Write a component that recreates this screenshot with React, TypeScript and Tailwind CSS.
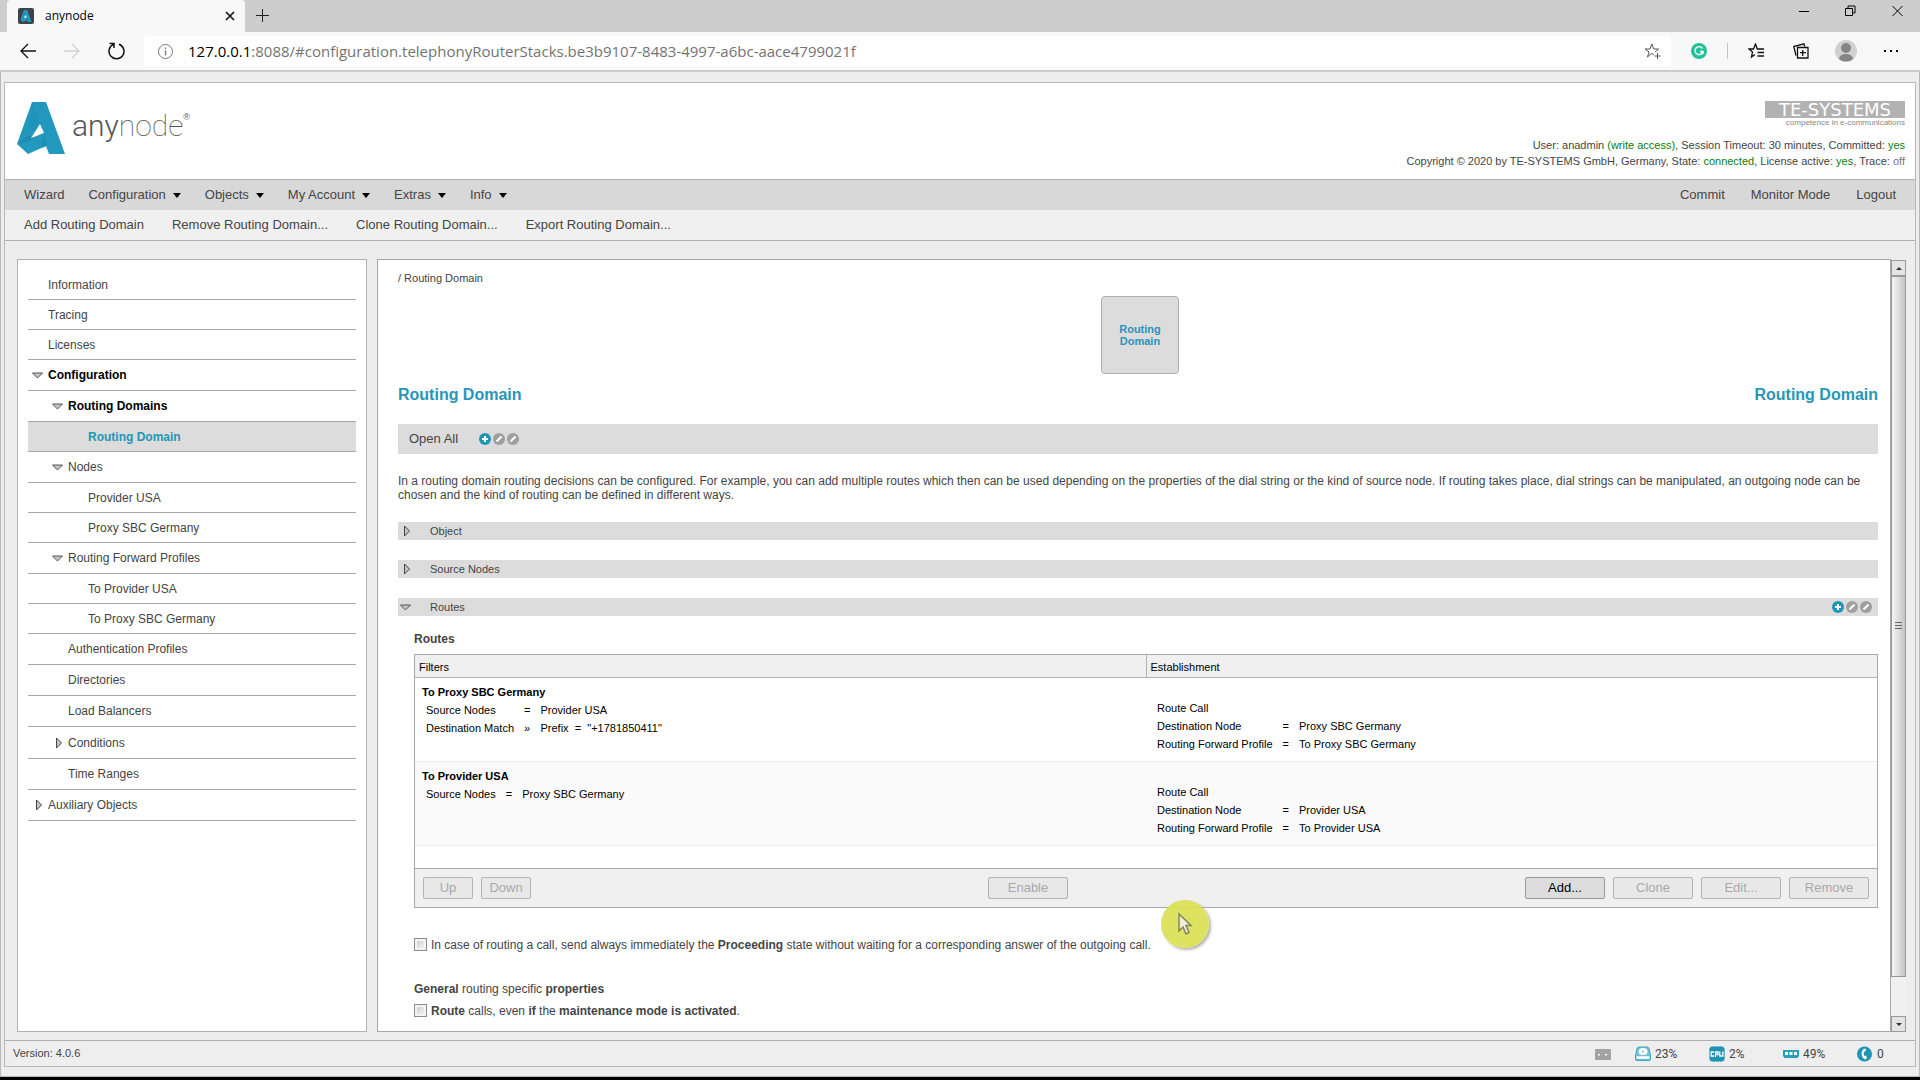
import { ReactNode } from "react";

// ---------- Types ----------
type TREE_ITEM = {
  label: string;
  level: number;
  rowClass: string;
  arrow?: "down" | "right";
  bold?: boolean;
  active?: boolean;
};

type ROUTE = {
  name: string;
  filters: { key: string; sign: string; value: ReactNode }[];
  node: string;
  profile: string;
};

// ---------- Data ----------
const tree: TREE_ITEM[] = [
  { label: "Information", level: 0, rowClass: "h-[30px]" },
  { label: "Tracing", level: 0, rowClass: "h-[30px]" },
  { label: "Licenses", level: 0, rowClass: "h-[30px]" },
  { label: "Configuration", level: 0, rowClass: "h-[31px]", arrow: "down", bold: true },
  { label: "Routing Domains", level: 1, rowClass: "h-[31px]", arrow: "down", bold: true },
  { label: "Routing Domain", level: 2, rowClass: "h-[30px]", bold: true, active: true },
  { label: "Nodes", level: 1, rowClass: "h-[31px]", arrow: "down" },
  { label: "Provider USA", level: 2, rowClass: "h-[30px]" },
  { label: "Proxy SBC Germany", level: 2, rowClass: "h-[30px]" },
  { label: "Routing Forward Profiles", level: 1, rowClass: "h-[31px]", arrow: "down" },
  { label: "To Provider USA", level: 2, rowClass: "h-[30px]" },
  { label: "To Proxy SBC Germany", level: 2, rowClass: "h-[30px]" },
  { label: "Authentication Profiles", level: 1, rowClass: "h-[31px]" },
  { label: "Directories", level: 1, rowClass: "h-[31px]" },
  { label: "Load Balancers", level: 1, rowClass: "h-[31px]" },
  { label: "Conditions", level: 1, rowClass: "h-[32px]", arrow: "right" },
  { label: "Time Ranges", level: 1, rowClass: "h-[31px]" },
  { label: "Auxiliary Objects", level: 0, rowClass: "h-[31px]", arrow: "right" },
];

const routes: ROUTE[] = [
  {
    name: "To Proxy SBC Germany",
    filters: [
      { key: "Source Nodes", sign: "=", value: "Provider USA" },
      { key: "Destination Match", sign: "»", value: <>Prefix&nbsp; = &nbsp;"+1781850411"</> },
    ],
    node: "Proxy SBC Germany",
    profile: "To Proxy SBC Germany",
  },
  {
    name: "To Provider USA",
    filters: [{ key: "Source Nodes", sign: "=", value: "Proxy SBC Germany" }],
    node: "Provider USA",
    profile: "To Provider USA",
  },
];

const menu = ["Configuration", "Objects", "My Account", "Extras", "Info"];
const actions = ["Add Routing Domain", "Remove Routing Domain...", "Clone Routing Domain...", "Export Routing Domain..."];
const indents = ["pl-0", "pl-5", "pl-10"];

// ---------- Icons ----------
const Arrow = ({ dir }: { dir: "down" | "right" }) => (
  <svg width="12" height="12" viewBox="0 0 12 12" className="shrink-0">
    {dir === "down" ? (
      <path d="M.5 4h10L5.500 9z" fill="#c4c4c4" stroke="#555" />
    ) : (
      <path d="M4.500 1v10l5-5z" fill="#c4c4c4" stroke="#444" />
    )}
  </svg>
);

const RoundActions = () => (
  <span className="flex gap-[2px]">
    <button aria-label="Add">
      <svg width="12" height="12" viewBox="0 0 12 12">
        <circle cx="6" cy="6" r="6" fill="#1e96b8" />
        <path d="M6 3v6M3 6h6" stroke="#fff" strokeWidth="2" />
      </svg>
    </button>
    {["Edit", "Edit all"].map(name => (
      <button key={name} aria-label={name}>
        <svg width="12" height="12" viewBox="0 0 12 12">
          <circle cx="6" cy="6" r="6" fill="#9f9f9f" />
          <path d="M3.500 8.500l5-5" stroke="#fff" strokeWidth="2.200" />
        </svg>
      </button>
    ))}
  </span>
);

const LogoMark = ({ className }: { className: string }) => (
  <svg viewBox="0 0 48 52" className={className}>
    <path d="M15 0h14l19 52H32l-3-8-18 8L0 42z" fill="#2298be" />
    <path d="M15 0l8 22-4 8-7-6z" fill="#1c8bb0" opacity=".4" />
    <path d="M0 42l10-8 17-3-17 9z" fill="#1a84a8" opacity=".6" />
    <path d="M27 31l3 13-5 2z" fill="#1a84a8" opacity=".5" />
    <path d="M23 22l4 9-10 4-3 1z" fill="#fff" />
  </svg>
);

// ---------- Browser window ----------
const BrowserChrome = () => (
  <>
    <div className="flex h-8 items-start justify-between bg-[#cdcdcd]">
      <div className="flex items-start pl-[7px]">
        <div className="flex h-8 w-[238px] items-center rounded-t bg-[#f8f8f8] px-[10px]">
          <span className="mr-[11px] ml-px flex h-4 w-4 items-center justify-center rounded-xs bg-[#3d4448]">
            <LogoMark className="h-3 w-3" />
          </span>
          <span className="grow font-['Open_Sans',sans-serif] text-xs text-black">anynode</span>
          <button aria-label="Close tab">
            <svg width="10" height="10" viewBox="0 0 10 10" stroke="#111" strokeWidth="1.600">
              <path d="M1 1l8 8M9 1L1 9" />
            </svg>
          </button>
        </div>
        <button aria-label="New tab" className="mt-[9px] ml-[11px]">
          <svg width="13" height="13" viewBox="0 0 13 13" stroke="#222">
            <path d="M6.500 0v13M0 6.500h13" />
          </svg>
        </button>
      </div>
      <div className="mt-[5px] mr-[17px] flex items-center gap-9 stroke-black">
        <button aria-label="Minimize">
          <svg width="10" height="12" viewBox="0 0 10 12"><path d="M0 6.500h10" /></svg>
        </button>
        <button aria-label="Restore">
          <svg width="11" height="12" viewBox="0 0 11 12" fill="none">
            <path d="M.5 3.500h7v7h-7zM3 3V1h7v7H8" />
          </svg>
        </button>
        <button aria-label="Close">
          <svg width="11" height="12" viewBox="0 0 11 12"><path d="M.5 1l10 10M10.500 1l-10 10" /></svg>
        </button>
      </div>
    </div>

    <div className="flex h-10 items-center border-b-2 border-[#cbcbcb] bg-[#f8f8f8] pr-[21px] pl-5">
      <button aria-label="Back" className="mr-7">
        <svg width="16" height="16" viewBox="0 0 16 16" fill="none" stroke="#111" strokeWidth="1.300">
          <path d="M8 1L1 8l7 7M1 8h15" />
        </svg>
      </button>
      <button aria-label="Forward" className="mr-7">
        <svg width="16" height="16" viewBox="0 0 16 16" fill="none" stroke="#cfcfcf" strokeWidth="1.300">
          <path d="M8 1l7 7-7 7M15 8H0" />
        </svg>
      </button>
      <button aria-label="Reload" className="mr-[19px]">
        <svg width="17" height="18" viewBox="0 0 17 18" fill="none" stroke="#111" strokeWidth="1.500">
          <path d="M11 2.200a7.500 7.500 0 1 1-5.500.2M1.500 1.500h4.500V6" />
        </svg>
      </button>
      <div className="flex h-[30px] grow items-center rounded bg-white px-[14px]">
        <svg width="15" height="15" viewBox="0 0 15 15" fill="none" stroke="#777" className="mr-[15px] shrink-0">
          <circle cx="7.500" cy="7.500" r="7" />
          <path d="M7.500 6.500v5M7.500 3.500v1.500" strokeWidth="1.300" />
        </svg>
        <label htmlFor="url" className="font-['Open_Sans',sans-serif] text-[15px] text-black">127.0.0.1</label>
        <input
          id="url"
          className="min-w-0 grow bg-transparent font-['Open_Sans',sans-serif] text-[15px] text-[#737373] outline-none"
          defaultValue=":8088/#configuration.telephonyRouterStacks.be3b9107-8483-4997-a6bc-aace4799021f"
        />
        <button aria-label="Add to favorites">
          <svg width="17" height="17" viewBox="0 0 17 17" fill="none" stroke="#555" className="-mr-1">
            <path d="M10 12l-2.500-1.500L3.500 14l1.500-5-4-3h5l1.800-5 1.800 5h5l-3.500 3M13.500 10v6M10.500 13h6" />
          </svg>
        </button>
      </div>
      <span className="ml-5 flex h-4 w-4 items-center justify-center rounded-full bg-[#22c197]">
        <svg width="10" height="10" viewBox="0 0 10 10" fill="none" stroke="#fff" strokeWidth="1.400">
          <path d="M8.500 2.500A4 4 0 1 0 9 5.500H6M9 5.500V8" />
        </svg>
      </span>
      <span className="mx-5 h-4 w-px bg-[#c4c4c4]" />
      <button aria-label="Favorites" className="mr-7">
        <svg width="17" height="16" viewBox="0 0 17 16" fill="none" stroke="#111" strokeWidth="1.300">
          <path d="M7 11.500L3.500 14l1-5L1 6h4.500l2-5 1.800 5H16M9.500 9.500H16M9.500 13H16" />
        </svg>
      </button>
      <button aria-label="Collections" className="mr-[26px]">
        <svg width="16" height="16" viewBox="0 0 16 16" fill="none" stroke="#111" strokeWidth="1.300">
          <path d="M4.500 4.500h10.500v10.500H4.500zM9.700 7v6M7 9.700h6M3 12.500L.8 3.500 11 .8l.6 2.500" />
        </svg>
      </button>
      <button aria-label="Profile" className="mr-[27px]">
        <svg width="22" height="22" viewBox="0 0 22 22">
          <circle cx="11" cy="11" r="11" fill="#d0d0d0" />
          <circle cx="11" cy="8" r="5" fill="#858585" />
          <path d="M4 19a7 5 0 0 1 14 0 11 11 0 0 1-14 0z" fill="#858585" />
        </svg>
      </button>
      <button aria-label="Settings">
        <svg width="15" height="3" viewBox="0 0 15 3"><path d="M0 0h2v2H0zM6 0h2v2H6zM12 0h2v2h-2z" /></svg>
      </button>
    </div>
  </>
);

// ---------- Header ----------
const Header = () => (
  <header className="flex h-24 justify-between bg-white pr-[10px] pl-3">
    <div className="flex pt-[19px]">
      <LogoMark className="mr-[7px] h-[52px] w-12" />
      <span className="font-['Roboto',sans-serif] text-[30px] leading-[48px] font-light text-[#555]">
        any<span className="font-thin">node</span>
      </span>
      <span className="pt-[10px] text-[9px] leading-[10px] text-[#555]">®</span>
    </div>
    <div className="flex flex-col items-end pt-[18px] text-[11px] leading-4 text-[#444]">
      <div className="h-[17px] w-[140px] bg-[#b2b2b2] text-center font-['DejaVu_Sans',sans-serif] text-lg leading-[17px] text-white">
        TE-SYSTEMS
      </div>
      <div className="mb-[9px] text-[8px] leading-[10px] text-[#888]">competence in e-communications</div>
      <div>
        User: anadmin <span className="text-[#0a7d0a]">(write access)</span>, Session Timeout: 30 minutes, Committed:{" "}
        <span className="text-[#0a7d0a]">yes</span>
      </div>
      <div>
        Copyright © 2020 by TE-SYSTEMS GmbH, Germany, State: <span className="text-[#0a7d0a]">connected</span>, License
        active: <span className="text-[#0a7d0a]">yes</span>, Trace: <span className="text-[#777]">off</span>
      </div>
    </div>
  </header>
);

const MenuBar = () => (
  <nav className="border-y border-[#b0b0b0] text-[13px] text-[#444]">
    <div className="flex h-[30px] items-center justify-between bg-[#d8d8d8] pr-[19px] pl-[19px]">
      <div className="flex gap-6">
        <button>Wizard</button>
        {menu.map(item => (
          <button key={item} className="flex items-center gap-[7px]">
            {item}
            <svg width="8" height="5" viewBox="0 0 8 5"><path d="M0 0h8L4 5z" /></svg>
          </button>
        ))}
      </div>
      <div className="flex gap-[26px]">
        <button>Commit</button>
        <button>Monitor Mode</button>
        <button>Logout</button>
      </div>
    </div>
    <div className="flex h-[30px] items-center gap-7 bg-[#f0f0f0] pl-[19px]">
      {actions.map(item => <button key={item}>{item}</button>)}
    </div>
  </nav>
);

// ---------- Sidebar ----------
const Sidebar = () => (
  <aside className="w-[350px] shrink-0 border border-[#b0b0b0] bg-white px-[10px] pt-[10px]">
    <ul className="text-xs text-[#444]">
      {tree.map(item => (
        <li
          key={item.label}
          className={`flex items-center border-b border-[#a8a8a8] pl-1 ${item.rowClass} ${item.active ? "bg-[#dcdcdc]" : ""}`}
        >
          <a
            href="#configuration"
            className={`flex items-center gap-1 ${indents[item.level]} ${
              item.active ? "font-bold text-[#2596b8]" : item.bold ? "font-bold text-black" : ""
            }`}
          >
            {item.arrow ? <Arrow dir={item.arrow} /> : <span className="w-3" />}
            {item.label}
          </a>
        </li>
      ))}
    </ul>
  </aside>
);

// ---------- Content ----------
const Section = ({ title, open, children }: { title: string; open?: boolean; children?: ReactNode }) => (
  <div className="mt-5 flex h-[18px] items-center justify-between bg-[#dcdcdc] pr-[6px] pl-[2px] text-[11px] text-[#444]">
    <button className="flex items-center gap-[18px]">
      <Arrow dir={open ? "down" : "right"} />
      {title}
    </button>
    {children}
  </div>
);

const ToolButton = ({ children, small, enabled }: { children: string; small?: boolean; enabled?: boolean }) => (
  <button
    disabled={!enabled}
    className={`h-[22px] rounded-xs border text-[13px] leading-5 ${small ? "w-[50px]" : "w-20"} ${
      enabled ? "border-[#999] bg-[#dcdcdc] text-black" : "border-[#b4b4b4] bg-[#e8e8e8] text-[#a8a8a8]"
    }`}
  >
    {children}
  </button>
);

const RoutesTable = () => (
  <div className="mt-2 border border-[#a8a8a8] text-[11px] text-black">
    <table className="w-full table-fixed border-collapse text-left">
      <thead>
        <tr className="h-[22px] border-b border-[#b4b4b4] bg-[#f0f0f0]">
          <th className="border-r border-[#b4b4b4] pt-[2px] pl-1 font-normal">Filters</th>
          <th className="pt-[2px] pl-1 font-normal">Establishment</th>
        </tr>
      </thead>
      <tbody>
        {routes.map(route => (
          <tr key={route.name} className="h-[84px] border-b border-[#ececec] align-top leading-[18px] even:bg-[#fafafa]">
            <td className="pt-[5px] pl-[7px]">
              <div className="font-bold">{route.name}</div>
              <div className="grid grid-cols-[auto_auto_1fr] gap-x-[10px] pl-1">
                {route.filters.map(filter => (
                  <div key={filter.key} className="contents">
                    <span>{filter.key}</span>
                    <span>{filter.sign}</span>
                    <span>{filter.value}</span>
                  </div>
                ))}
              </div>
            </td>
            <td className="pt-[21px] pl-[11px]">
              <div>Route Call</div>
              <div className="grid grid-cols-[auto_auto_1fr] gap-x-[10px]">
                <span>Destination Node</span><span>=</span><span>{route.node}</span>
                <span>Routing Forward Profile</span><span>=</span><span>{route.profile}</span>
              </div>
            </td>
          </tr>
        ))}
      </tbody>
    </table>
    <div className="h-[22px]" />
    <div className="flex h-[39px] items-center justify-between border-t border-[#a8a8a8] bg-[#f0f0f0] px-2">
      <div className="flex gap-2">
        <ToolButton small>Up</ToolButton>
        <ToolButton small>Down</ToolButton>
      </div>
      <ToolButton>Enable</ToolButton>
      <div className="flex gap-2">
        <ToolButton enabled>Add...</ToolButton>
        <ToolButton>Clone</ToolButton>
        <ToolButton>Edit...</ToolButton>
        <ToolButton>Remove</ToolButton>
      </div>
    </div>
  </div>
);

const CheckRow = ({ id, className, children }: { id: string; className: string; children: ReactNode }) => (
  <div className={`flex items-center gap-1 ${className}`}>
    <input
      id={id}
      type="checkbox"
      className="h-[13px] w-[13px] appearance-none border border-[#8c8c8c] bg-linear-to-br from-[#c4c4c4] to-white shadow-[inset_0_0_0_2px_#f4f4f4]"
    />
    <label htmlFor={id}>{children}</label>
  </div>
);

const Content = () => (
  <main className="min-w-0 grow overflow-hidden border border-[#a8a8a8] bg-white pt-[11px] pr-3 pl-5 text-xs leading-[14px] text-[#444]">
    <div className="text-[11px]">/ Routing Domain</div>
    <div className="mt-[11px] flex justify-center pl-1">
      <div className="flex h-[78px] w-[78px] items-center justify-center rounded border border-[#b0b0b0] bg-[#dcdcdc] text-center text-[11px] leading-3 font-bold text-[#2596b8]">
        Routing<br />Domain
      </div>
    </div>
    <div className="mt-[11px] flex justify-between text-base leading-5 font-bold text-[#2596b8]">
      <h1>Routing Domain</h1>
      <h2>Routing Domain</h2>
    </div>
    <div className="mt-[19px] flex h-[30px] items-center gap-[21px] bg-[#dcdcdc] pl-[11px] text-[13px]">
      <button>Open All</button>
      <RoundActions />
    </div>
    <p className="mt-5">
      In a routing domain routing decisions can be configured. For example, you can add multiple routes which then can be
      used depending on the properties of the dial string or the kind of source node. If routing takes place, dial strings
      can be manipulated, an outgoing node can be chosen and the kind of routing can be defined in different ways.
    </p>
    <Section title="Object" />
    <Section title="Source Nodes" />
    <Section title="Routes" open>
      <RoundActions />
    </Section>
    <div className="pl-4">
      <h3 className="mt-4 font-bold">Routes</h3>
      <RoutesTable />
      <CheckRow id="proceeding" className="mt-[30px]">
        In case of routing a call, send always immediately the <b>Proceeding</b> state without waiting for a corresponding
        answer of the outgoing call.
      </CheckRow>
      <div className="mt-[30px]"><b>General</b> routing specific <b>properties</b></div>
      <CheckRow id="maintenance" className="mt-2">
        <b>Route</b> calls, even <b>if</b> the <b>maintenance mode is activated</b>.
      </CheckRow>
    </div>
  </main>
);

const ScrollBar = () => (
  <div className="flex w-[15px] shrink-0 flex-col bg-[#f0f0f0] pt-px">
    <button aria-label="Scroll up" className="flex h-4 shrink-0 items-center justify-center border border-[#999] bg-[#e4e4e4]">
      <svg width="6" height="3" viewBox="0 0 6 3"><path d="M0 3h6L3 0z" fill="#333" /></svg>
    </button>
    <div className="flex grow-[700] items-center justify-center border border-[#999] bg-linear-to-r from-[#f4f4f4] via-[#dedede] to-[#c4c4c4]">
      <svg width="7" height="8" viewBox="0 0 7 8" stroke="#666"><path d="M0 .5h7M0 3.500h7M0 6.500h7" /></svg>
    </div>
    <div className="grow-[40]" />
    <button aria-label="Scroll down" className="flex h-4 shrink-0 items-center justify-center border border-[#999] bg-[#e4e4e4]">
      <svg width="6" height="3" viewBox="0 0 6 3"><path d="M0 0h6L3 3z" fill="#333" /></svg>
    </button>
  </div>
);

// ---------- Status bar ----------
const StatusBar = () => (
  <footer className="flex h-[26px] items-center justify-between border-t border-[#b0b0b0] bg-[#eee] pr-[10px] pl-2 text-[11px] text-[#444]">
    <span>Version: 4.0.6</span>
    <div className="flex items-center font-['Roboto',sans-serif] text-xs">
      <svg width="16" height="16" viewBox="0 0 16 16" className="mr-6">
        <rect y="3" width="16" height="11" rx="1" fill="#a2a2a2" />
        <path d="M3 8h2v1.500H3zM10 8h2v1.500h-2z" fill="#fff" />
      </svg>
      <span className="flex w-[74px] items-center gap-1">
        <svg width="16" height="16" viewBox="0 0 16 16">
          <path d="M4 1h8q1.500 0 2 1.500L15.500 10v3q0 1.500-1.500 1.500H2Q.5 14.500.5 13v-3L2 2.500Q2.500 1 4 1z" fill="#6fc0d6" stroke="#3aa6c4" />
          <ellipse cx="8" cy="5.500" rx="4.500" ry="3.500" fill="#fff" />
          <circle cx="8" cy="5.500" r="1" fill="#6dbdd3" />
          <path d="M1.500 11.500h13" stroke="#fff" strokeWidth="2.500" />
        </svg>
        23%
      </span>
      <span className="flex w-[74px] items-center gap-1">
        <svg width="16" height="16" viewBox="0 0 16 16">
          <rect x=".7" y=".7" width="14.600" height="14.600" rx="2.500" fill="#1e93b5" stroke="#1e93b5" strokeDasharray="1 1" />
          <path d="M5 6H2.200v4H5M6.500 11V6H9v2.500H6.500M10.800 5.500V10h3V5.500" fill="none" stroke="#fff" strokeWidth="1.300" />
        </svg>
        2%
      </span>
      <span className="flex w-[74px] items-center gap-1">
        <svg width="16" height="16" viewBox="0 0 16 16">
          <path d="M0 4h16v6l-1.500 2h-13L0 10z" fill="#2a9dbd" />
          <path d="M2 6h3v3H2zM6.500 6h3v3h-3zM11 6h3v3h-3z" fill="#fff" />
        </svg>
        49%
      </span>
      <span className="flex w-12 items-center gap-1">
        <svg width="16" height="16" viewBox="0 0 16 16">
          <circle cx="7.500" cy="8" r="7.500" fill="#1e93b5" />
          <path d="M7.500 2.500C3.500 4 3.500 12 8.500 13.500l1.700-2-1.700-2-1 .5C6.500 8.500 6.500 7 7.100 5.700l1.200-.2.9-2z" fill="#fff" />
        </svg>
        0
      </span>
    </div>
  </footer>
);

const Pointer = () => (
  <div className="pointer-events-none absolute top-[900px] left-[1161px] flex h-12 w-12 items-center justify-center rounded-full bg-[#d9e04f]/90 shadow-[2px_2px_3px_rgba(0,0,0,0.3)]">
    <svg width="15" height="24" viewBox="0 0 15 24">
      <path d="M1 2v17l4-4 3 7 3-1.500-3-7h5z" fill="#eeeedd" stroke="#85855c" strokeWidth="1.500" />
    </svg>
  </div>
);

const App = () => {
  return (
    <div className="relative flex h-screen flex-col overflow-hidden border-b-3 border-black bg-[#ededed] font-['Liberation_Sans',Arial,sans-serif]">
      <BrowserChrome />
      <div className="flex min-h-0 grow flex-col border-x border-b border-[#b8b8b8] px-[3px] pt-[10px] pb-[9px]">
        <div className="flex min-h-0 grow flex-col border border-[#b8b8b8]">
          <Header />
          <MenuBar />
          <div className="flex min-h-0 grow pt-[18px] pr-[9px] pb-2 pl-3">
            <Sidebar />
            <div className="w-[10px] shrink-0" />
            <Content />
            <ScrollBar />
          </div>
          <StatusBar />
        </div>
      </div>
      <Pointer />
    </div>
  );
};

export default App;
